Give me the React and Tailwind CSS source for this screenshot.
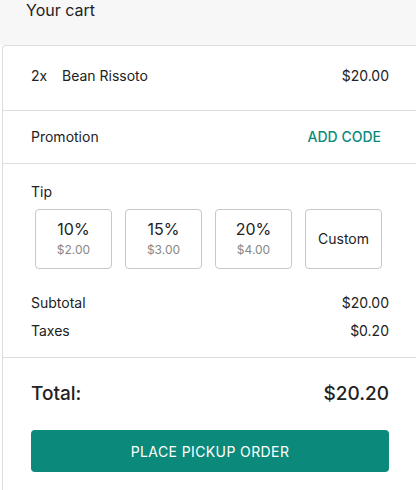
import React, { useState } from "react";

const tips = [
  { pct: "10%", amount: "$2.00" },
  { pct: "15%", amount: "$3.00" },
  { pct: "20%", amount: "$4.00" },
];

const App = () => {
  const [tip, setTip] = useState(null);

  return (
    <div className="min-h-screen w-[416px] overflow-hidden bg-white text-[#222] font-['Inter',sans-serif]">
      <div className="h-[45px] bg-[#f7f7f7] pl-[26px] text-[16px] leading-[20px]">Your cart</div>

      <div className="ml-[2px] w-[415px] border-t border-l border-[#dddddd] rounded-tl-[4px]">
        <div className="flex items-center justify-between px-[28px] pt-[20px] pb-[24px] text-[14px] leading-[20px] border-b border-[#dddddd]">
          <div className="flex">
            <span className="w-[31px]">2x</span>
            <span>Bean Rissoto</span>
          </div>
          <span>$20.00</span>
        </div>

        <div className="flex items-center justify-between px-[28px] pt-[16px] pb-[16px] text-[14px] leading-[20px] border-b border-[#dddddd]">
          <span>Promotion</span>
          <button className="text-[#0b8a7b] font-medium mr-[8px]">ADD CODE</button>
        </div>

        <div className="px-[28px] pt-[18px] pb-[16px] text-[14px] leading-[20px] border-b border-[#dddddd]">
          <div>Tip</div>
          <div className="flex gap-[13px] pl-[4px] mt-[7px]">
            {tips.map((t) => (
              <button
                key={t.pct}
                onClick={() => setTip(t.pct)}
                className={`w-[77px] h-[60px] flex flex-col items-center justify-center rounded-[4px] border ${
                  tip === t.pct ? "border-[#0b8a7b]" : "border-[#c8c8c8]"
                }`}
              >
                <span className="text-[16px] leading-[20px]">{t.pct}</span>
                <span className="mt-[1px] text-[12px] leading-[20px] text-[#888]">{t.amount}</span>
              </button>
            ))}
            <button
              onClick={() => setTip("custom")}
              className={`w-[77px] h-[60px] flex items-center justify-center rounded-[4px] border ${
                tip === "custom" ? "border-[#0b8a7b]" : "border-[#c8c8c8]"
              }`}
            >
              Custom
            </button>
          </div>
          <div className="flex justify-between mt-[24px]">
            <span>Subtotal</span>
            <span>$20.00</span>
          </div>
          <div className="flex justify-between mt-[8px]">
            <span>Taxes</span>
            <span>$0.20</span>
          </div>
        </div>

        <div className="px-[28px] pt-[22px] pb-[20px]">
          <div className="flex justify-between text-[19px] leading-[28px] font-medium">
            <span>Total:</span>
            <span>$20.20</span>
          </div>
          <button className="mt-[22px] w-full h-[42px] rounded-[4px] bg-[#0b8a7b] text-white text-[14px] tracking-[0.4px]">
            PLACE PICKUP ORDER
          </button>
        </div>
      </div>
    </div>
  );
};

export default App;
